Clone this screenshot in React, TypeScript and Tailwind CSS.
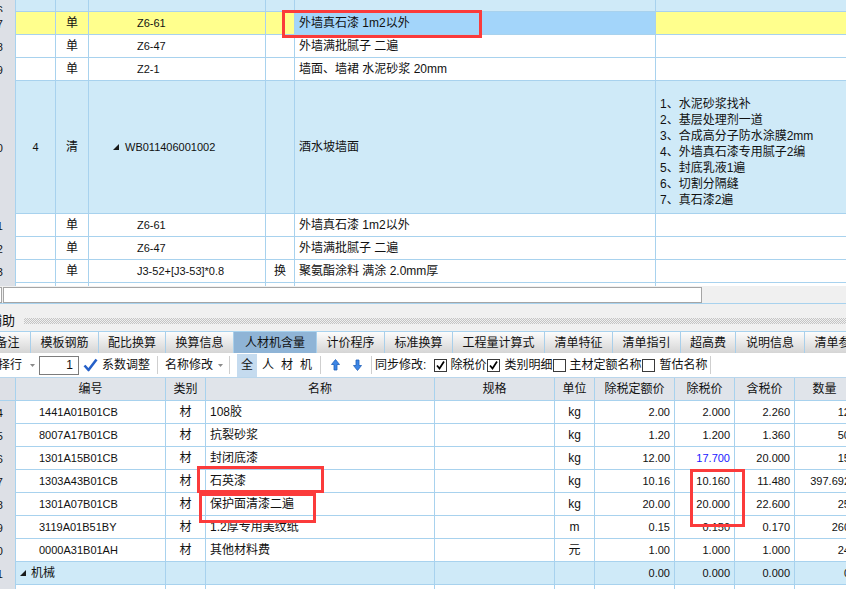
import React from "react";

const font = "font-['Liberation_Sans','Noto_Sans_CJK_SC',sans-serif]";

function TreeTri() {
  return (
    <svg width="6" height="6" viewBox="0 0 6 6" className="shrink-0">
      <polygon points="0,6 6,6 6,0" fill="#1a1a1a" />
    </svg>
  );
}

function Caret() {
  return (
    <svg width="5" height="3" viewBox="0 0 5 3" className="shrink-0">
      <polygon points="0,0 5,0 2.5,3" fill="#8a8a8a" />
    </svg>
  );
}

function Sep() {
  return <div className="w-px h-[18px] bg-[#cfcfcf] shrink-0" />;
}

function Check({ on }: { on: boolean }) {
  return (
    <div className="w-[13px] h-[13px] border border-[#3a3a3a] bg-white shrink-0 flex items-center justify-center">
      {on && (
        <svg width="11" height="11" viewBox="0 0 11 11">
          <path d="M2 5.5 L4.5 8.5 L9 1.5" stroke="#000" strokeWidth="1.7" fill="none" />
        </svg>
      )}
    </div>
  );
}

type TopR = {
  n: string;
  seq?: string;
  type: string;
  code: string;
  huan?: string;
  name: string;
  bg: string;
  nameBg?: string;
};

const topA: TopR[] = [
  { n: "17", type: "单", code: "Z6-61", name: "外墙真石漆 1m2以外", bg: "bg-[#ffff8d]", nameBg: "bg-[#a3d5fa]" },
  { n: "18", type: "单", code: "Z6-47", name: "外墙满批腻子 二遍", bg: "bg-white" },
  { n: "19", type: "单", code: "Z2-1", name: "墙面、墙裙 水泥砂浆 20mm", bg: "bg-white" },
];

const topB: TopR[] = [
  { n: "21", type: "单", code: "Z6-61", name: "外墙真石漆 1m2以外", bg: "bg-white" },
  { n: "22", type: "单", code: "Z6-47", name: "外墙满批腻子 二遍", bg: "bg-white" },
  { n: "23", type: "单", code: "J3-52+[J3-53]*0.8", huan: "换", name: "聚氨酯涂料 满涂 2.0mm厚", bg: "bg-white" },
];

const features = [
  "1、水泥砂浆找补",
  "2、基层处理剂一道",
  "3、合成高分子防水涂膜2mm",
  "4、外墙真石漆专用腻子2编",
  "5、封底乳液1遍",
  "6、切割分隔缝",
  "7、真石漆2遍",
];

function TopRow({ r }: { r: TopR }) {
  return (
    <div className={`flex h-[23px] ${r.bg}`}>
      <div className="w-[16px] shrink-0 bg-[#dde0e6] border-r border-[#a8d2ee] flex items-center justify-end pr-[12px] overflow-hidden text-[11px]">
        {r.n}
      </div>
      <div className="w-[40px] shrink-0 border-r border-b border-[#a8d2ee] flex items-center justify-center text-[11px]">{r.seq}</div>
      <div className="w-[33px] shrink-0 border-r border-b border-[#a8d2ee] flex items-center justify-center">{r.type}</div>
      <div className="w-[177px] shrink-0 border-r border-b border-[#a8d2ee] flex items-center pl-[48px] text-[11px] whitespace-nowrap">
        {r.code}
      </div>
      <div className="w-[29px] shrink-0 border-r border-b border-[#a8d2ee] flex items-center justify-center">{r.huan}</div>
      <div className={`w-[361px] shrink-0 border-r border-b border-[#a8d2ee] flex items-center pl-[4px] whitespace-nowrap ${r.nameBg ?? ""}`}>
        {r.name}
      </div>
      <div className="flex-1 border-b border-[#a8d2ee]" />
    </div>
  );
}

const tabs = [
  { t: "备注", w: "w-[46px] ml-[-15px]" },
  { t: "模板钢筋", w: "w-[68px]" },
  { t: "配比换算", w: "w-[67px]" },
  { t: "换算信息", w: "w-[68px]" },
  { t: "人材机含量", w: "w-[83px]", active: true },
  { t: "计价程序", w: "w-[68px]" },
  { t: "标准换算", w: "w-[68px]" },
  { t: "工程量计算式", w: "w-[92px]" },
  { t: "清单特征", w: "w-[68px]" },
  { t: "清单指引", w: "w-[68px]" },
  { t: "超高费", w: "w-[55px]" },
  { t: "说明信息", w: "w-[69px]" },
  { t: "清单参数", w: "w-[68px]" },
];

type BotR = {
  n: string;
  code: string;
  name: string;
  unit: string;
  p1: string;
  p2: string;
  p3: string;
  q: string;
  blue?: boolean;
};

const bottom: BotR[] = [
  { n: "24", code: "1441A01B01CB", name: "108胶", unit: "kg", p1: "2.00", p2: "2.000", p3: "2.260", q: "12" },
  { n: "25", code: "8007A17B01CB", name: "抗裂砂浆", unit: "kg", p1: "1.20", p2: "1.200", p3: "1.360", q: "50" },
  { n: "26", code: "1301A15B01CB", name: "封闭底漆", unit: "kg", p1: "12.00", p2: "17.700", p3: "20.000", q: "15", blue: true },
  { n: "27", code: "1303A43B01CB", name: "石英漆", unit: "kg", p1: "10.16", p2: "10.160", p3: "11.480", q: "397.692" },
  { n: "28", code: "1301A07B01CB", name: "保护面清漆二遍", unit: "kg", p1: "20.00", p2: "20.000", p3: "22.600", q: "25" },
  { n: "29", code: "3119A01B51BY", name: "1.2厚专用美纹纸", unit: "m", p1: "0.15", p2: "0.150", p3: "0.170", q: "260" },
  { n: "30", code: "0000A31B01AH", name: "其他材料费", unit: "元", p1: "1.00", p2: "1.000", p3: "1.000", q: "24" },
];

function BotRow({ r }: { r: BotR }) {
  return (
    <div className="flex h-[23px] bg-white">
      <div className="w-[16px] shrink-0 bg-[#dde0e6] border-r border-[#a8d2ee] flex items-center justify-end pr-[12px] overflow-hidden text-[11px]">
        {r.n}
      </div>
      <div className="w-[150px] shrink-0 border-r border-b border-[#a8d2ee] flex items-center pl-[23px] text-[11px]">{r.code}</div>
      <div className="w-[40px] shrink-0 border-r border-b border-[#a8d2ee] flex items-center justify-center">材</div>
      <div className="w-[229px] shrink-0 border-r border-b border-[#a8d2ee] flex items-center pl-[4px] whitespace-nowrap">{r.name}</div>
      <div className="w-[120px] shrink-0 border-r border-b border-[#a8d2ee]" />
      <div className="w-[40px] shrink-0 border-r border-b border-[#a8d2ee] flex items-center justify-center text-[12px]">{r.unit}</div>
      <div className="w-[80px] shrink-0 border-r border-b border-[#a8d2ee] flex items-center justify-end pr-[4px] text-[11px]">{r.p1}</div>
      <div className={`w-[60px] shrink-0 border-r border-b border-[#a8d2ee] flex items-center justify-end pr-[4px] text-[11px] ${r.blue ? "text-[#1a1aff]" : ""}`}>
        {r.p2}
      </div>
      <div className="w-[60px] shrink-0 border-r border-b border-[#a8d2ee] flex items-center justify-end pr-[4px] text-[11px]">{r.p3}</div>
      <div className="w-[60px] shrink-0 border-r border-b border-[#a8d2ee] flex items-center justify-end pr-[4px] text-[11px]">{r.q}</div>
    </div>
  );
}

export default function App() {
  return (
    <div className={`${font} relative w-[846px] h-[589px] overflow-hidden bg-white text-[12px] text-[#111] leading-[16px]`}>
      {/* upper grid */}
      <div className="flex h-[12px] bg-[#cfeaf8]">
        <div className="w-[16px] shrink-0 bg-[#dde0e6] border-r border-[#a8d2ee] flex items-end justify-end pr-[12px] overflow-hidden text-[11px]">
          <span className="mb-[-6px]">16</span>
        </div>
        <div className="w-[40px] shrink-0 border-r border-b border-[#a8d2ee]" />
        <div className="w-[33px] shrink-0 border-r border-b border-[#a8d2ee]" />
        <div className="w-[177px] shrink-0 border-r border-b border-[#a8d2ee]" />
        <div className="w-[29px] shrink-0 border-r border-b border-[#a8d2ee]" />
        <div className="w-[361px] shrink-0 border-r border-b border-[#a8d2ee]" />
        <div className="flex-1 border-b border-[#a8d2ee] overflow-hidden pl-[27px]">
          <div className="mt-[-13px] whitespace-nowrap">刷封闭漆一道</div>
        </div>
      </div>
      {topA.map((r) => (
        <TopRow key={r.n} r={r} />
      ))}
      <div className="flex h-[133px] bg-[#cfeaf8]">
        <div className="w-[16px] shrink-0 bg-[#dde0e6] border-r border-[#a8d2ee] flex items-center justify-end pr-[12px] overflow-hidden text-[11px]">
          20
        </div>
        <div className="w-[40px] shrink-0 border-r border-b border-[#a8d2ee] flex items-center justify-center text-[11px]">4</div>
        <div className="w-[33px] shrink-0 border-r border-b border-[#a8d2ee] flex items-center justify-center">清</div>
        <div className="w-[177px] shrink-0 border-r border-b border-[#a8d2ee] flex items-center pl-[24px] text-[11px]">
          <TreeTri />
          <span className="ml-[6px]">WB011406001002</span>
        </div>
        <div className="w-[29px] shrink-0 border-r border-b border-[#a8d2ee]" />
        <div className="w-[361px] shrink-0 border-r border-b border-[#a8d2ee] flex items-center pl-[4px]">酒水坡墙面</div>
        <div className="flex-1 border-b border-[#a8d2ee] pt-[15px] pl-[4px] whitespace-nowrap">
          {features.map((f) => (
            <div key={f}>{f}</div>
          ))}
        </div>
      </div>
      {topB.map((r) => (
        <TopRow key={r.n} r={r} />
      ))}
      <div className="flex h-[3px] bg-white">
        <div className="w-[16px] shrink-0 bg-[#dde0e6] border-r border-[#a8d2ee]" />
        <div className="w-[40px] shrink-0 border-r border-[#a8d2ee]" />
        <div className="w-[33px] shrink-0 border-r border-[#a8d2ee]" />
        <div className="w-[177px] shrink-0 border-r border-[#a8d2ee]" />
        <div className="w-[29px] shrink-0 border-r border-[#a8d2ee]" />
        <div className="w-[361px] shrink-0 border-r border-[#a8d2ee]" />
      </div>

      {/* horizontal scroll bar */}
      <div className="flex h-[18px] bg-[#f0f0f0] border-b border-[#a8d2ee]">
        <div className="w-[2px] h-[16px] mt-[1px] border-y border-r border-[#a5a5a5] bg-white" />
        <div className="ml-[1px] w-[699px] h-[16px] mt-[1px] bg-white border border-[#a5a5a5]" />
      </div>

      {/* 辅助 strip */}
      <div className="flex h-[27px] bg-[#f0f0f0] items-start">
        <span className="ml-[-11px] mt-[9px] whitespace-nowrap text-[13px]">辅助</span>
        <div className="flex-1 ml-[9px] mt-[14px] h-[6px] bg-[conic-gradient(#c4c4c4_25%,transparent_0_50%,#c4c4c4_0_75%,transparent_0)] bg-size-[2px_2px]" />
      </div>

      {/* tabs */}
      <div className="flex h-[22px] border-t border-[#a8d2ee] bg-[#e4e4e4] whitespace-nowrap">
        {tabs.map((t) => (
          <div
            key={t.t}
            className={`${t.w} shrink-0 h-[21px] border-r border-[#a9cfea] flex items-center justify-center ${
              t.active ? "bg-[#8fb4d6]" : "bg-linear-to-b from-[#fcfcfc] to-[#d5d5d5]"
            }`}
          >
            {t.t}
          </div>
        ))}
      </div>

      {/* toolbar */}
      <div className="flex h-[24px] items-center bg-white whitespace-nowrap">
        <span className="ml-[-14px]">选择行</span>
        <div className="ml-[8px]">
          <Caret />
        </div>
        <div className="ml-[4px] w-[40px] h-[19px] border border-[#7c7c7c] bg-white flex items-center justify-end pr-[5px] shrink-0">1</div>
        <svg width="15" height="14" viewBox="0 0 15 14" className="ml-[4px] shrink-0">
          <path d="M1.5 7.5 L5.5 12 L13.5 1.5" stroke="#2560c8" strokeWidth="2.6" fill="none" strokeLinejoin="round" />
        </svg>
        <span className="ml-[4px]">系数调整</span>
        <div className="ml-[7px]">
          <Sep />
        </div>
        <span className="ml-[7px]">名称修改</span>
        <div className="ml-[5px]">
          <Caret />
        </div>
        <div className="ml-[6px]">
          <Sep />
        </div>
        <div className="ml-[7px] w-[20px] h-[23px] bg-[#c5dbef] flex items-center justify-center shrink-0">全</div>
        <span className="ml-[5px]">人</span>
        <span className="ml-[7px]">材</span>
        <span className="ml-[7px]">机</span>
        <div className="ml-[8px]">
          <Sep />
        </div>
        <svg width="9" height="12" viewBox="0 0 9 12" className="ml-[10px] shrink-0">
          <polygon points="4.5,0.5 8.5,5.5 6,5.5 6,11 3,11 3,5.5 0.5,5.5" fill="#3d86e6" stroke="#1f5fb8" strokeWidth="0.8" />
        </svg>
        <svg width="9" height="12" viewBox="0 0 9 12" className="ml-[13px] shrink-0">
          <polygon points="3,1 6,1 6,6.5 8.5,6.5 4.5,11.5 0.5,6.5 3,6.5" fill="#3d86e6" stroke="#1f5fb8" strokeWidth="0.8" />
        </svg>
        <div className="ml-[9px]">
          <Sep />
        </div>
        <span className="ml-[3px]">同步修改:</span>
        <div className="ml-[8px]">
          <Check on />
        </div>
        <span className="ml-[3px]">除税价</span>
        <div className="ml-[1px]">
          <Check on />
        </div>
        <span className="ml-[4px]">类别明细</span>
        <div className="ml-[1px]">
          <Check on={false} />
        </div>
        <span className="ml-[3px]">主材定额名称</span>
        <div className="ml-[1px]">
          <Check on={false} />
        </div>
        <span className="ml-[4px]">暂估名称</span>
        <div className="ml-[2px]">
          <Sep />
        </div>
      </div>

      {/* lower grid header */}
      <div className="flex h-[24px] border-t border-[#b9d6ec] bg-[#e0e4ea] whitespace-nowrap">
        <div className="w-[16px] shrink-0 bg-[#dde0e6] border-r border-b border-[#a8d2ee]" />
        <div className="w-[150px] shrink-0 border-r border-b border-[#a8d2ee] flex items-center justify-center">编号</div>
        <div className="w-[40px] shrink-0 border-r border-b border-[#a8d2ee] flex items-center justify-center">类别</div>
        <div className="w-[229px] shrink-0 border-r border-b border-[#a8d2ee] flex items-center justify-center">名称</div>
        <div className="w-[120px] shrink-0 border-r border-b border-[#a8d2ee] flex items-center justify-center">规格</div>
        <div className="w-[40px] shrink-0 border-r border-b border-[#a8d2ee] flex items-center justify-center">单位</div>
        <div className="w-[80px] shrink-0 border-r border-b border-[#a8d2ee] flex items-center justify-center">除税定额价</div>
        <div className="w-[60px] shrink-0 border-r border-b border-[#a8d2ee] flex items-center justify-center">除税价</div>
        <div className="w-[60px] shrink-0 border-r border-b border-[#a8d2ee] flex items-center justify-center">含税价</div>
        <div className="w-[60px] shrink-0 border-r border-b border-[#a8d2ee] flex items-center justify-center">数量</div>
      </div>
      {bottom.map((r) => (
        <BotRow key={r.n} r={r} />
      ))}
      <div className="flex h-[23px] bg-[#cfeaf8]">
        <div className="w-[16px] shrink-0 bg-[#dde0e6] border-r border-[#a8d2ee] flex items-center justify-end pr-[12px] overflow-hidden text-[11px]">
          31
        </div>
        <div className="w-[150px] shrink-0 border-r border-b border-[#a8d2ee] flex items-center pl-[4px]">
          <TreeTri />
          <span className="ml-[5px]">机械</span>
        </div>
        <div className="w-[40px] shrink-0 border-r border-b border-[#a8d2ee]" />
        <div className="w-[229px] shrink-0 border-r border-b border-[#a8d2ee]" />
        <div className="w-[120px] shrink-0 border-r border-b border-[#a8d2ee]" />
        <div className="w-[40px] shrink-0 border-r border-b border-[#a8d2ee]" />
        <div className="w-[80px] shrink-0 border-r border-b border-[#a8d2ee] flex items-center justify-end pr-[4px] text-[11px]">0.00</div>
        <div className="w-[60px] shrink-0 border-r border-b border-[#a8d2ee] flex items-center justify-end pr-[4px] text-[11px]">0.000</div>
        <div className="w-[60px] shrink-0 border-r border-b border-[#a8d2ee] flex items-center justify-end pr-[4px] text-[11px]">0.000</div>
        <div className="w-[60px] shrink-0 border-r border-b border-[#a8d2ee] flex items-center justify-end pr-[4px] text-[11px]">0</div>
      </div>
      <div className="flex h-[6px] bg-white">
        <div className="w-[16px] shrink-0 bg-[#dde0e6] border-r border-[#a8d2ee]" />
        <div className="w-[150px] shrink-0 border-r border-[#a8d2ee]" />
        <div className="w-[40px] shrink-0 border-r border-[#a8d2ee]" />
        <div className="w-[229px] shrink-0 border-r border-[#a8d2ee]" />
        <div className="w-[120px] shrink-0 border-r border-[#a8d2ee]" />
        <div className="w-[40px] shrink-0 border-r border-[#a8d2ee]" />
        <div className="w-[80px] shrink-0 border-r border-[#a8d2ee]" />
        <div className="w-[60px] shrink-0 border-r border-[#a8d2ee]" />
        <div className="w-[60px] shrink-0 border-r border-[#a8d2ee]" />
      </div>

      {/* red annotation boxes */}
      <div className="absolute left-[282px] top-[10px] w-[200px] h-[28px] border-[3px] border-[#fb3b3b]" />
      <div className="absolute left-[197px] top-[466px] w-[127px] h-[27px] border-[3px] border-[#fb3b3b]" />
      <div className="absolute left-[199px] top-[493px] w-[117px] h-[30px] border-[3px] border-[#fb3b3b]" />
      <div className="absolute left-[690px] top-[469px] w-[55px] h-[58px] border-[3px] border-[#fb3b3b]" />
    </div>
  );
}
